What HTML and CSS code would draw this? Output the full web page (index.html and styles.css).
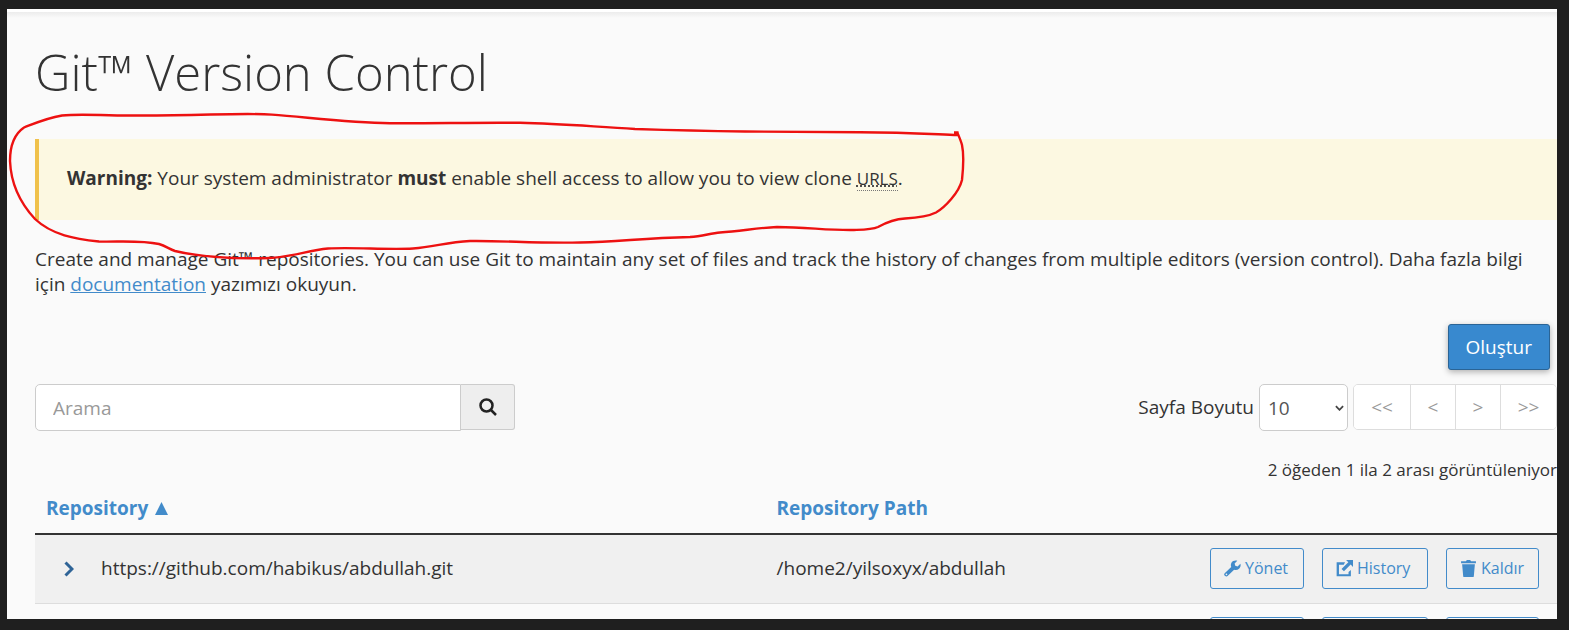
FILE: index.html
```html
<!DOCTYPE html>
<html lang="tr">
<head>
<meta charset="utf-8">
<title>Git™ Version Control</title>
<link rel="stylesheet" href="styles.css">
</head>
<body>
<svg class="sprite" aria-hidden="true">
  <symbol id="wrench" viewBox="0 0 16 16"><path fill-rule="evenodd" d="M15.4 3.5 12.8 6 10.600 5.500 10 3.300 12.500.6C10.300 0 8 .7 7 2.600c-.7 1.300-.7 2.700-.2 3.900L.9 12.300a1.700 1.700 0 0 0 0 2.600c.8.8 2 .8 2.700 0l5.900-5.800c1.600.6 3.300.3 4.600-.9 1.400-1.300 1.900-3 1.300-4.700zM2.300 14.300a.8.8 0 1 1 0-1.600.8.8 0 0 1 0 1.600z"/></symbol>
  <symbol id="share" viewBox="0 0 16 16"><path d="M8.500 2.200H.6v13.200H14V9.500l-2.200 1.800v2H2.800V4.500h4.500zM9.500 0H16v6.500l-2.200-2.200-6.300 6.400-2.300-2.300 6.400-6.200z"/></symbol>
  <symbol id="trash" viewBox="0 0 16 16"><path d="M1 1.200h4.500L6.500 0h3l1 1.200H15V3H1zM2 4h12l-1 11.200c0 .5-.4.8-.9.8H3.900c-.5 0-.9-.3-.9-.8z"/></symbol>
</svg>
<main class="page">
  <h1 class="title">Git™ Version Control</h1>
  <div class="warning" role="alert"><strong>Warning:</strong> Your system administrator <strong>must</strong> enable shell access to allow you to view clone <abbr class="abbr" title="Uniform Resource Locators">URLS</abbr>.</div>
  <p class="intro">Create and manage Git™ repositories. You can use Git to maintain any set of files and track the history of changes from multiple editors (version control). Daha fazla bilgi için <a href="#documentation">documentation</a> yazımızı okuyun.</p>
  <div class="actions"><button class="create" type="button">Oluştur</button></div>
  <div class="toolbar">
    <form class="search">
      <input class="search-input" type="search" placeholder="Arama" aria-label="Arama">
      <button class="search-button" type="button" aria-label="Ara"><svg viewBox="0 0 18 18" class="search-icon"><circle cx="7.500" cy="7.500" r="6"/><path d="m12 12 5 5"/></svg></button>
    </form>
    <div class="paging">
      <label for="size">Sayfa Boyutu</label>
      <span class="select-wrap"><select id="size" class="size"><option>10</option><option>20</option><option>50</option></select><svg class="caret" viewBox="0 0 10 6"><path d="m1 1 4 4 4-4"/></svg></span>
      <nav class="pager" aria-label="Sayfalar"><button type="button" disabled>&lt;&lt;</button><button type="button" disabled>&lt;</button><button type="button" disabled>&gt;</button><button type="button" disabled>&gt;&gt;</button></nav>
    </div>
  </div>
  <p class="count">2 öğeden 1 ila 2 arası görüntüleniyor</p>
  <table class="repos">
    <thead><tr><th class="col-repo"><a href="#sort">Repository <svg class="sort" viewBox="0 0 13 13"><path d="M6.500 0 13 13H0z"/></svg></a></th><th class="col-path"><a href="#path">Repository Path</a></th><th class="col-actions"></th></tr></thead>
    <tbody>
      <tr>
        <td><div class="repo"><button class="expand" type="button" aria-label="Genişlet"><svg viewBox="0 0 10 16"><path d="m1.500 1.500 6.500 6.500-6.500 6.500"/></svg></button><span>https://github.com/habikus/abdullah.git</span></div></td>
        <td>/home2/yilsoxyx/abdullah</td>
        <td><div class="row-actions"><button type="button"><svg><use href="#wrench"/></svg>Yönet</button><button type="button"><svg><use href="#share"/></svg>History</button><button type="button"><svg><use href="#trash"/></svg>Kaldır</button></div></td>
      </tr>
      <tr>
        <td></td>
        <td></td>
        <td><div class="row-actions"><button type="button" aria-label="Yönet"><svg><use href="#wrench"/></svg></button><button type="button" aria-label="History"><svg><use href="#share"/></svg></button><button type="button" aria-label="Kaldır"><svg><use href="#trash"/></svg></button></div></td>
      </tr>
    </tbody>
  </table>
</main>
<svg class="marker" width="980" height="270" viewBox="0 0 980 270" aria-hidden="true"><path d="M954 132.500h3.500l.5 2.500C930 134 905 132.500 860 132.200L745 131.500C700 131 665 130 635 129 590 126.500 560 123.500 520 122.800 480 122.300 430 123.500 390 123.200 350 122.500 310 117.500 272 114.600 240 112.500 200 116 130 115.500 100 115.500 80 113.500 62 115.500 47 118 38 122 24 127.500 13 135 10 147 10 161 11 185 21 204 35 219 52 235 75 239 99 241.500c20 .5 42-1.500 60 2.500 7 2 10 5 16 7 25 6 60 8 95 7 22-1 38-7.500 58-9.500 25-1.500 60 1.500 85 0 22-1.500 33-6.500 57-7.500 35-.5 65 2.500 110 1.500 40-.5 60-4.500 110-5.500 12-.8 20-3.500 30-4.500 22-1.500 38-4.800 57-5.500 30 0 50 3.500 77 3 9-.3 18-.3 24-3 9-5 18-8 27-8.500 9-.5 22-1.500 31-6 9-5 23-20 26-32.500 1.500-14 1.500-28 0-35-1-4-3-8.500-4.500-12"/></svg>
</body>
</html>
```

FILE: styles.css
```css
* { box-sizing: border-box; }

body {
  margin: 0;
  height: 100vh;
  padding: 9px 12px 11px 7px;
  background: #1f1f1f;
  color: #333;
  font: 19px/25px "Open Sans", "Noto Sans", sans-serif;
}

button, input, select { font: inherit; color: inherit; }
a { color: #428bca; }
.sprite { display: none; }

.page {
  height: 100%;
  overflow: hidden;
  padding: 30px 0 0 28px;
  border-top: 3px solid #fff;
  background: linear-gradient(#ececec, #fafafa 6px);
}

.title { margin: 0 0 37px; font-size: 49px; line-height: 60px; font-weight: 300; }

.warning {
  padding: 27px 28px 29px;
  border-left: 4px solid #f0c14b;
  background: #fcf8e1;
}
.warning strong { font-weight: 700; }
.abbr { font-size: 17px; text-decoration: underline dotted; border-bottom: 1px dotted #777; }

.intro { margin: 27px 0; padding-right: 8px; }

.actions { display: flex; justify-content: flex-end; padding-right: 7px; }
.create {
  height: 46px;
  padding: 0 17px;
  border: 1px solid #2a6496;
  border-radius: 3px;
  background: #3889cf;
  color: #fff;
  box-shadow: 0 2px 6px rgba(0, 0, 0, .3);
}

.toolbar { display: flex; justify-content: space-between; margin-top: 14px; }
.search { display: flex; width: 480px; height: 47px; align-items: flex-start; }
.search-input {
  flex: 1;
  min-width: 0;
  height: 47px;
  padding: 0 17px;
  border: 1px solid #ccc;
  border-radius: 5px 0 0 5px;
  background: #fff;
}
.search-input::placeholder { color: #999; }
.search-button {
  display: flex;
  align-items: center;
  justify-content: center;
  width: 54px;
  height: 46px;
  padding: 0;
  border: 1px solid #ccc;
  border-left: 0;
  border-radius: 0 3px 3px 0;
  background: #eee;
}
.search-icon { width: 18px; height: 18px; fill: none; stroke: #222; stroke-width: 2.500; }

.paging { display: flex; align-items: flex-start; gap: 5px; line-height: 47px; }
.select-wrap { position: relative; display: block; }
.size {
  display: block;
  width: 89px;
  height: 47px;
  padding: 0 8px;
  appearance: none;
  border: 1px solid #ccc;
  border-radius: 5px;
  background: #fff;
  color: #555;
}
.caret { position: absolute; right: 4px; top: 21px; width: 9px; height: 6px; fill: none; stroke: #444; stroke-width: 2; pointer-events: none; }
.pager { display: flex; height: 46px; border: 1px solid #ddd; border-radius: 5px; background: #fff; overflow: hidden; }
.pager button { padding: 0 16px; border: 0; border-left: 1px solid #ddd; background: #fff; color: #999; line-height: 42px; }
.pager button { min-width: 45px; }
.pager button:first-child, .pager button:last-child { min-width: 56px; }
.pager button:first-child { border-left: 0; }

.count { margin: 26px 0 0; font-size: 17px; text-align: right; }

.repos { width: 100%; margin-top: 7px; border-collapse: collapse; table-layout: fixed; }
.repos th { height: 45px; padding: 0 11px 6px; text-align: left; border-bottom: 2px solid #333; }
.repos th a { text-decoration: none; }
.repos td { height: 69px; padding: 0 11px; border-bottom: 1px solid #ddd; }
.repos tbody tr:first-child { background: #f0f0f0; }
.col-repo { width: 48%; }
.col-actions { width: 370px; }
.sort { width: 13px; height: 13px; margin-left: 2px; fill: #428bca; }
.repo { display: flex; align-items: center; gap: 20px; padding-left: 12px; }
.expand { display: flex; width: 23px; padding: 0 6px; border: 0; background: none; }
.expand svg { width: 10px; height: 16px; fill: none; stroke: #2f6497; stroke-width: 3; }
.row-actions { display: grid; grid-template-columns: 94px 106px 93px; justify-content: flex-end; gap: 18px; padding-right: 7px; }
.row-actions button {
  display: flex;
  align-items: center;
  gap: 4px;
  height: 41px;
  padding: 0 13px;
  border: 1px solid #428bca;
  border-radius: 3px;
  background: transparent;
  color: #428bca;
  font-size: 16px;
}
.row-actions svg { width: 17px; height: 17px; flex: none; fill: #428bca; }

.marker { position: absolute; left: 0; top: 0; fill: none; stroke: #ed1111; stroke-width: 2.400; pointer-events: none; }
```
